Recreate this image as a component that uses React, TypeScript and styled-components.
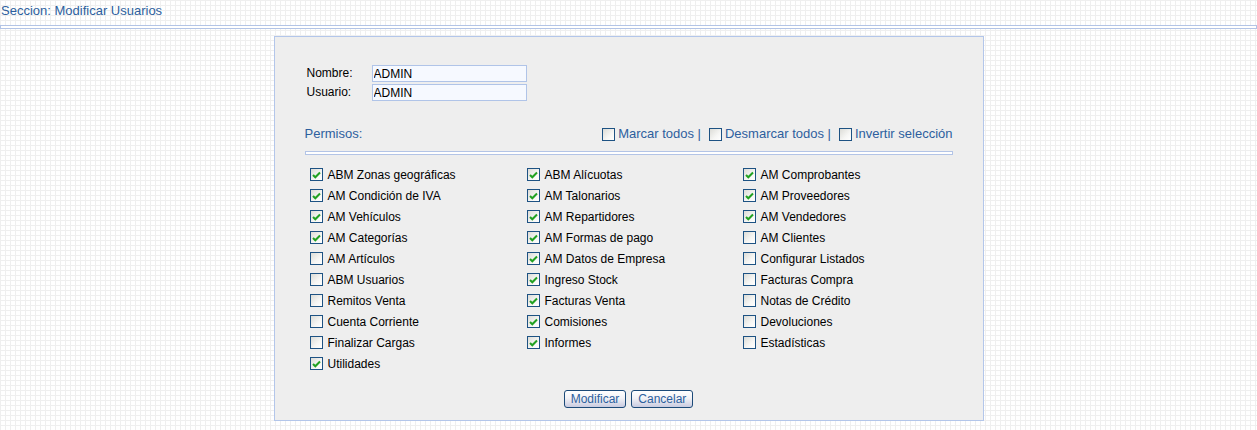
import React from "react";
import styled, { createGlobalStyle } from "styled-components";

const GlobalStyle = createGlobalStyle`
  html, body { margin: 0; padding: 0; }
  body {
    background-color: #ffffff;
    background-image:
      linear-gradient(#efefef 1px, transparent 1px),
      linear-gradient(90deg, #efefef 1px, transparent 1px);
    background-size: 5px 5px;
    font-family: "Liberation Sans", Arial, sans-serif;
    font-size: 12px;
    color: #000;
  }
`;

const Page = styled.div`
  width: 1257px;
  height: 430px;
  overflow: hidden;
`;

const Title = styled.div`
  height: 25px;
  padding: 3px 0 0 1px;
  box-sizing: border-box;
  color: #2d5f9e;
  font-size: 13px;
  line-height: 15px;
`;

const Rule = styled.div`
  box-sizing: border-box;
  height: 4px;
  width: 100%;
  border: 1px solid #b3c4e6;
  background: #ffffff;
`;

const Panel = styled.div`
  box-sizing: border-box;
  width: 710px;
  height: 385px;
  margin: 7px auto 0;
  border: 1px solid #b3c6ea;
  background: #eeeeee;
  padding: 28px 30px 12px 30px;
  display: flex;
  flex-direction: column;
`;

const FormGrid = styled.div`
  display: grid;
  grid-template-columns: 65px 155px;
  row-gap: 2px;
  align-items: center;
  padding-left: 2px;
`;

const Label = styled.label`
  font-size: 12px;
  line-height: 17px;
`;

const TextInput = styled.input`
  box-sizing: border-box;
  height: 17px;
  width: 155px;
  border: 1px solid #b0c4e8;
  background: #f6f9ff;
  font-family: "Liberation Sans", Arial, sans-serif;
  font-size: 12px;
  padding: 0 1px;
  color: #000;
  outline: none;
`;

const PermHeader = styled.div`
  margin-top: 25px;
  display: flex;
  justify-content: space-between;
  align-items: center;
  height: 16px;
  line-height: 16px;
`;

const BlueText = styled.span`
  color: #2d5f9e;
  font-size: 13px;
`;

const Actions = styled.div`
  display: flex;
  align-items: center;
  color: #2d5f9e;
  font-size: 13px;
`;

const ActionItem = styled.span`
  display: inline-flex;
  align-items: center;
  gap: 3px;
  margin-left: 8px;
  cursor: pointer;
`;

const SepWrap = styled.div`
  margin-top: 9px;
  margin-bottom: 9px;
`;

const Grid = styled.div`
  display: grid;
  grid-template-columns: 217px 216px 216px;
  grid-auto-rows: 21px;
  padding-left: 5px;
`;

const Item = styled.div`
  display: flex;
  align-items: center;
  gap: 5px;
  font-size: 12px;
`;

const Box = styled.span`
  box-sizing: border-box;
  width: 13px;
  height: 13px;
  border: 1px solid #1d5283;
  background: linear-gradient(135deg, #dcdcd7 0%, #f6f6f4 60%, #ffffff 100%);
  display: inline-flex;
  align-items: center;
  justify-content: center;
  flex: none;
`;

const Buttons = styled.div`
  margin-top: auto;
  display: flex;
  justify-content: center;
  gap: 5px;
`;

const Button = styled.button`
  box-sizing: border-box;
  height: 18px;
  padding: 0 6px;
  border: 1px solid #1c4a78;
  border-radius: 3px;
  background: linear-gradient(#ffffff 0%, #f2f2f6 45%, #c9cbe0 100%);
  color: #2d5f9e;
  font-family: "Liberation Sans", Arial, sans-serif;
  font-size: 12px;
  line-height: 14px;
  cursor: pointer;
`;

const Check = () => (
  <svg width="9" height="8" viewBox="0 0 9 8">
    <path d="M1 4 L3.3 6.3 L8 1.5" stroke="#21a121" strokeWidth="2" fill="none" />
  </svg>
);

const CheckBox: React.FC<{ checked?: boolean }> = ({ checked }) => (
  <Box>{checked && <Check />}</Box>
);

const perms: [string, boolean][][] = [
  [
    ["ABM Zonas geográficas", true],
    ["AM Condición de IVA", true],
    ["AM Vehículos", true],
    ["AM Categorías", true],
    ["AM Artículos", false],
    ["ABM Usuarios", false],
    ["Remitos Venta", false],
    ["Cuenta Corriente", false],
    ["Finalizar Cargas", false],
    ["Utilidades", true],
  ],
  [
    ["ABM Alícuotas", true],
    ["AM Talonarios", true],
    ["AM Repartidores", true],
    ["AM Formas de pago", true],
    ["AM Datos de Empresa", true],
    ["Ingreso Stock", true],
    ["Facturas Venta", true],
    ["Comisiones", true],
    ["Informes", true],
  ],
  [
    ["AM Comprobantes", true],
    ["AM Proveedores", true],
    ["AM Vendedores", true],
    ["AM Clientes", false],
    ["Configurar Listados", false],
    ["Facturas Compra", false],
    ["Notas de Crédito", false],
    ["Devoluciones", false],
    ["Estadísticas", false],
  ],
];

export default function App() {
  const rows = 10;
  const cells: React.ReactNode[] = [];
  for (let r = 0; r < rows; r++) {
    for (let c = 0; c < 3; c++) {
      const p = perms[c][r];
      cells.push(
        p ? (
          <Item key={`${r}-${c}`}>
            <CheckBox checked={p[1]} />
            <span>{p[0]}</span>
          </Item>
        ) : (
          <div key={`${r}-${c}`} />
        )
      );
    }
  }
  return (
    <Page>
      <GlobalStyle />
      <Title>Seccion: Modificar Usuarios</Title>
      <Rule />
      <Panel>
        <FormGrid>
          <Label>Nombre:</Label>
          <TextInput defaultValue="ADMIN" />
          <Label>Usuario:</Label>
          <TextInput defaultValue="ADMIN" />
        </FormGrid>
        <PermHeader>
          <BlueText>Permisos:</BlueText>
          <Actions>
            <ActionItem>
              <CheckBox />
              <span>Marcar todos |</span>
            </ActionItem>
            <ActionItem>
              <CheckBox />
              <span>Desmarcar todos |</span>
            </ActionItem>
            <ActionItem>
              <CheckBox />
              <span>Invertir selección</span>
            </ActionItem>
          </Actions>
        </PermHeader>
        <SepWrap>
          <Rule />
        </SepWrap>
        <Grid>{cells}</Grid>
        <Buttons>
          <Button>Modificar</Button>
          <Button>Cancelar</Button>
        </Buttons>
      </Panel>
    </Page>
  );
}
